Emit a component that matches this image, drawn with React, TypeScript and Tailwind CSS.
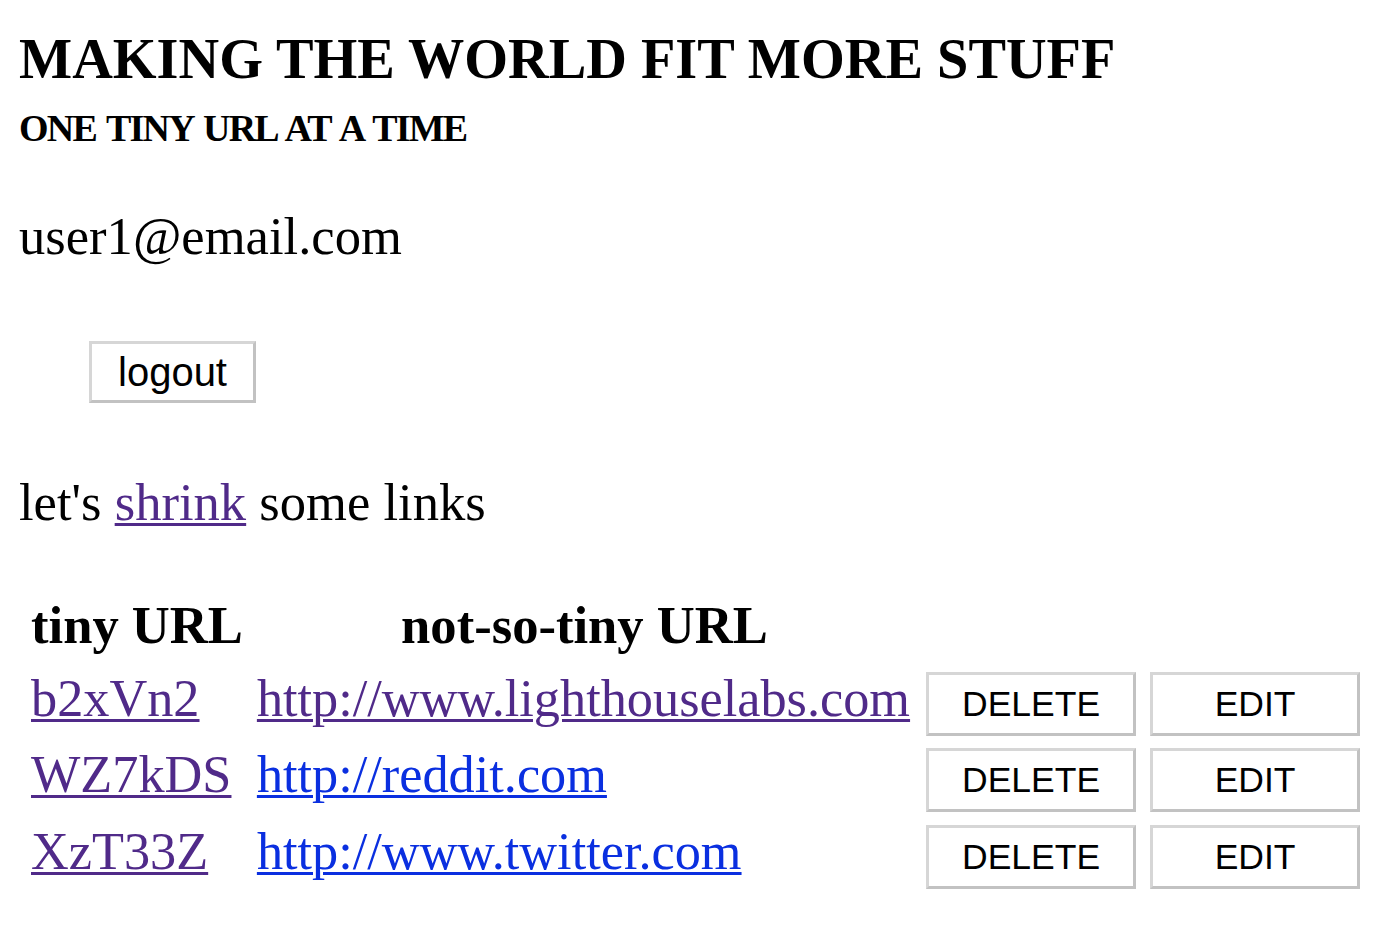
import React from 'react';

type Link = { short: string; long: string; visited: boolean };

const LINKS: Link[] = [
  { short: 'b2xVn2', long: 'http://www.lighthouselabs.com', visited: true },
  { short: 'WZ7kDS', long: 'http://reddit.com', visited: false },
  { short: 'XzT33Z', long: 'http://www.twitter.com', visited: false },
];

const linkBase =
  'underline decoration-[3px] underline-offset-[3px] text-[52.3px] leading-[60px]';
const visitedCls = 'text-[#502a89]';
const freshCls = 'text-[#0a2fe0]';

const btnCls =
  "bg-white text-black border-[3px] border-t-[#d6d6d6] border-l-[#d6d6d6] border-b-[#c2c2c2] border-r-[#c2c2c2] font-['Liberation_Sans',Arial,sans-serif]";

const App: React.FC = () => {
  return (
    <div className="min-h-[928px] bg-white text-black px-[19px] pt-[31px] font-['Liberation_Serif','Times_New_Roman',serif]">
      {/* Header */}
      <h1 className="text-[56.3px] leading-[56px] font-bold">MAKING THE WORLD FIT MORE STUFF</h1>
      <h3 className="mt-[22px] text-[38px] leading-[38px] font-bold tracking-[-1.8px] [word-spacing:3px]">
        ONE TINY URL AT A TIME
      </h3>

      {/* Logged in user */}
      <p className="mt-[63px] text-[52.6px] leading-[52px]">user1@email.com</p>
      <div className="mt-[79px] ml-[70px]">
        <button className={`${btnCls} h-[62px] px-[26px] text-[40px] leading-[56px]`}>logout</button>
      </div>

      <p className="mt-[73px] text-[52.6px] leading-[52px]">
        let's{' '}
        <a href="#" className={`${visitedCls} underline decoration-[3px] underline-offset-[3px]`}>
          shrink
        </a>{' '}
        some links
      </p>

      {/* URL table */}
      <div className="mt-[67px] ml-[12px] grid grid-cols-[auto_auto_auto_auto] items-baseline justify-start gap-x-[14px] gap-y-[8.5px]">
        <div className="justify-self-center pb-[4px] text-[52.6px] leading-[60px] font-bold">tiny URL</div>
        <div className="justify-self-center pb-[4px] text-[52.6px] leading-[60px] font-bold">not-so-tiny URL</div>
        <div />
        <div />
        {LINKS.map(l => (
          <React.Fragment key={l.short}>
            <a href="#" className={`${linkBase} ${visitedCls} justify-self-start`}>
              {l.short}
            </a>
            <a href="#" className={`${linkBase} ${l.visited ? visitedCls : freshCls} justify-self-start mr-[2px]`}>
              {l.long}
            </a>
            <button className={`${btnCls} w-[210px] h-[64px] text-[35.5px] leading-[58px]`}>DELETE</button>
            <button className={`${btnCls} w-[210px] h-[64px] text-[35.5px] leading-[58px]`}>EDIT</button>
          </React.Fragment>
        ))}
      </div>
    </div>
  );
};

export default App;
